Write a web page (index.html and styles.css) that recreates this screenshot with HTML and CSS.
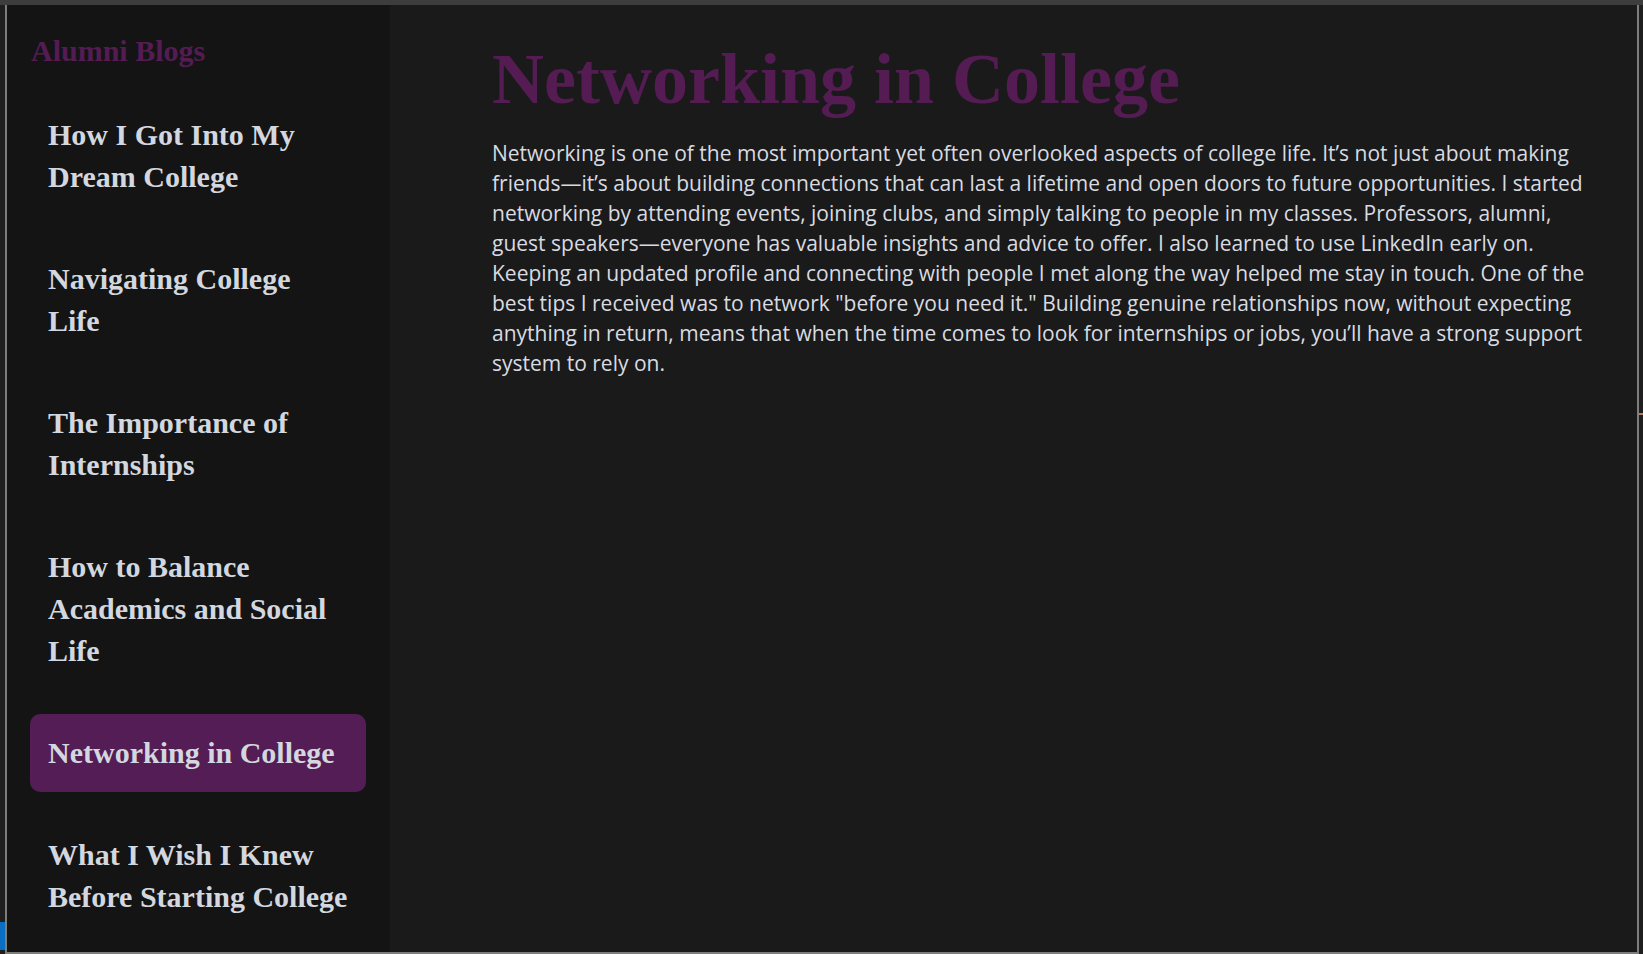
FILE: index.html
```html
<!DOCTYPE html>
<html lang="en">
<head>
<meta charset="utf-8">
<title>Alumni Blogs - Networking in College</title>
<link rel="stylesheet" href="styles.css">
</head>
<body>
<div class="topbar"></div>
<div class="shell">
  <div class="gutter-left"><div class="status-mark"></div></div>
  <div class="window">
    <aside class="sidebar">
      <h2 class="brand">Alumni Blogs</h2>
      <ul class="nav">
        <li><a class="nav-item" href="#">How I Got Into My Dream College</a></li>
        <li><a class="nav-item" href="#">Navigating College Life</a></li>
        <li><a class="nav-item" href="#">The Importance of Internships</a></li>
        <li><a class="nav-item" href="#">How to Balance Academics and Social Life</a></li>
        <li><a class="nav-item active" href="#">Networking in College</a></li>
        <li><a class="nav-item" href="#">What I Wish I Knew Before Starting College</a></li>
      </ul>
    </aside>
    <main class="content">
      <h1 class="post-title">Networking in College</h1>
      <p class="post-body">Networking is one of the most important yet often overlooked aspects of college life. It’s not just about making friends—it’s about building connections that can last a lifetime and open doors to future opportunities. I started networking by attending events, joining clubs, and simply talking to people in my classes. Professors, alumni, guest speakers—everyone has valuable insights and advice to offer. I also learned to use LinkedIn early on. Keeping an updated profile and connecting with people I met along the way helped me stay in touch. One of the best tips I received was to network "before you need it." Building genuine relationships now, without expecting anything in return, means that when the time comes to look for internships or jobs, you’ll have a strong support system to rely on.</p>
    </main>
  </div>
  <div class="gutter-right"><div class="scroll-mark"></div></div>
</div>
</body>
</html>
```

FILE: styles.css
```css
* { box-sizing: border-box; }

html, body {
  margin: 0;
  padding: 0;
  height: 954px;
  overflow: hidden;
  background: #1f1f1f;
}

.topbar {
  height: 5px;
  background: #3d3d3d;
}

.shell {
  display: flex;
  height: 949px;
}

.gutter-left {
  width: 5px;
  display: flex;
  flex-direction: column;
  justify-content: flex-end;
  padding-bottom: 4px;
}

.status-mark {
  height: 28px;
  background: #0a6fc2;
}

.gutter-right {
  width: 4px;
  position: relative;
}

.scroll-mark {
  position: absolute;
  top: 408px;
  left: 0;
  width: 4px;
  height: 2px;
  background: #c27b5a;
}

.window {
  flex: 1;
  display: flex;
  border-left: 2px solid #7d7d7d;
  border-right: 2px solid #7d7d7d;
  border-bottom: 2px solid #7d7d7d;
  background: #1a1a1a;
}

.sidebar {
  width: 383px;
  flex-shrink: 0;
  background: #141414;
  padding: 25px 24px 0 23px;
  font-family: "Liberation Serif", "Times New Roman", serif;
}

.brand {
  margin: 0 0 24px 1px;
  font-size: 30px;
  line-height: 42px;
  font-weight: bold;
  color: #551c54;
}

.nav {
  list-style: none;
  margin: 0;
  padding: 0;
  display: flex;
  flex-direction: column;
  gap: 24px;
}

.nav-item {
  display: block;
  padding: 18px;
  border-radius: 10px;
  font-size: 30px;
  line-height: 42px;
  font-weight: bold;
  color: #d3d7df;
  text-decoration: none;
}

.nav-item.active {
  background: #541d55;
}

.content {
  flex: 1;
  padding: 30px 48px 0 102px;
}

.post-title {
  margin: 0;
  font-family: "Liberation Serif", "Times New Roman", serif;
  font-size: 72px;
  line-height: 88px;
  font-weight: bold;
  color: #551c54;
}

.post-body {
  margin: 15px 0 0;
  font-family: "Open Sans", "Noto Sans", sans-serif;
  font-size: 21px;
  line-height: 30px;
  color: #d8dbe1;
}
```
